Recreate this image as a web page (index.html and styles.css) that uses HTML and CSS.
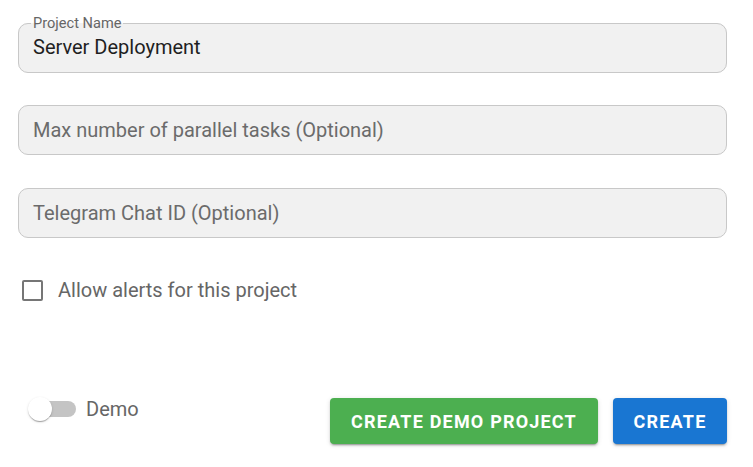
FILE: index.html
```html
<!DOCTYPE html>
<html>
<head>
<meta charset="utf-8">
<link rel="stylesheet" href="styles.css">
</head>
<body>
<div class="form">
  <fieldset class="field field-filled">
    <legend class="field-label">Project Name</legend>
    <div class="field-value">Server Deployment</div>
  </fieldset>
  <div class="field field-empty">
    <span class="placeholder">Max number of parallel tasks (Optional)</span>
  </div>
  <div class="field field-empty">
    <span class="placeholder">Telegram Chat ID (Optional)</span>
  </div>
  <label class="check-row">
    <span class="checkbox"></span>
    <span class="check-text">Allow alerts for this project</span>
  </label>
  <div class="actions">
    <div class="switch-row">
      <span class="switch"><span class="track"></span><span class="thumb"></span></span>
      <span class="switch-text">Demo</span>
    </div>
    <div class="buttons">
      <button class="btn btn-green">CREATE DEMO PROJECT</button>
      <button class="btn btn-blue">CREATE</button>
    </div>
  </div>
</div>
</body>
</html>
```
FILE: styles.css
```css
html, body {
  margin: 0;
  padding: 0;
  background: #ffffff;
}
body {
  font-family: Roboto, "Liberation Sans", sans-serif;
  width: 753px;
  height: 467px;
  overflow: hidden;
}
.form {
  width: 709px;
  margin-left: 18px;
  padding-top: 14px;
  display: flex;
  flex-direction: column;
}
.field {
  box-sizing: border-box;
  border: 1px solid #c8c8c8;
  border-radius: 10px;
  background: #f1f1f1;
  margin: 0;
}
.field-filled {
  padding: 0 12px 0 12px;
  height: 59px;
}
.field-label {
  font-size: 14.6px;
  line-height: 18px;
  color: #666666;
  padding: 0 2px;
  margin: 0;
}
.field-value {
  font-size: 20px;
  line-height: 24px;
  color: #1f1f1f;
  padding: 3px 2px 0;
}
.field-empty {
  height: 50px;
  display: flex;
  align-items: center;
  padding-left: 14px;
}
.field-filled + .field-empty {
  margin-top: 32px;
}
.field-empty + .field-empty {
  margin-top: 33px;
}
.placeholder {
  font-size: 20px;
  color: #6b6b6b;
}
.check-row {
  display: flex;
  align-items: center;
  margin-top: 40px;
  margin-left: 4px;
  height: 24px;
}
.checkbox {
  box-sizing: border-box;
  width: 21px;
  height: 21px;
  border: 2px solid #767676;
  border-radius: 2px;
}
.check-text {
  margin-left: 15px;
  font-size: 20px;
  color: #666666;
}
.actions {
  margin-top: 95px;
  display: flex;
  justify-content: space-between;
  align-items: flex-start;
}
.switch-row {
  display: flex;
  align-items: center;
  margin-left: 10px;
  margin-top: 0;
  height: 24px;
}
.switch {
  position: relative;
  width: 48px;
  height: 24px;
}
.track {
  position: absolute;
  left: 11px;
  top: 4px;
  width: 37px;
  height: 16px;
  border-radius: 8px;
  background: #c4c4c4;
}
.thumb {
  position: absolute;
  left: 0;
  top: 0;
  width: 24px;
  height: 24px;
  border-radius: 50%;
  background: #ffffff;
  box-shadow: 0 2px 1px -1px rgba(0,0,0,.2), 0 1px 1px 0 rgba(0,0,0,.14), 0 1px 3px 0 rgba(0,0,0,.12);
}
.switch-text {
  margin-left: 10px;
  font-size: 20px;
  color: #666666;
}
.buttons {
  display: flex;
  gap: 15px;
  margin-top: 1px;
}
.btn {
  font-family: Roboto, "Liberation Sans", sans-serif;
  font-weight: 700;
  font-size: 18px;
  letter-spacing: 1.2px;
  color: #ffffff;
  border: none;
  border-radius: 4px;
  height: 46px;
  padding: 0;
  box-shadow: 0 3px 1px -2px rgba(0,0,0,.2), 0 2px 2px 0 rgba(0,0,0,.14), 0 1px 5px 0 rgba(0,0,0,.12);
}
.btn-green {
  background: #4caf50;
  width: 268px;
}
.btn-blue {
  background: #1976d2;
  width: 114px;
}
```
